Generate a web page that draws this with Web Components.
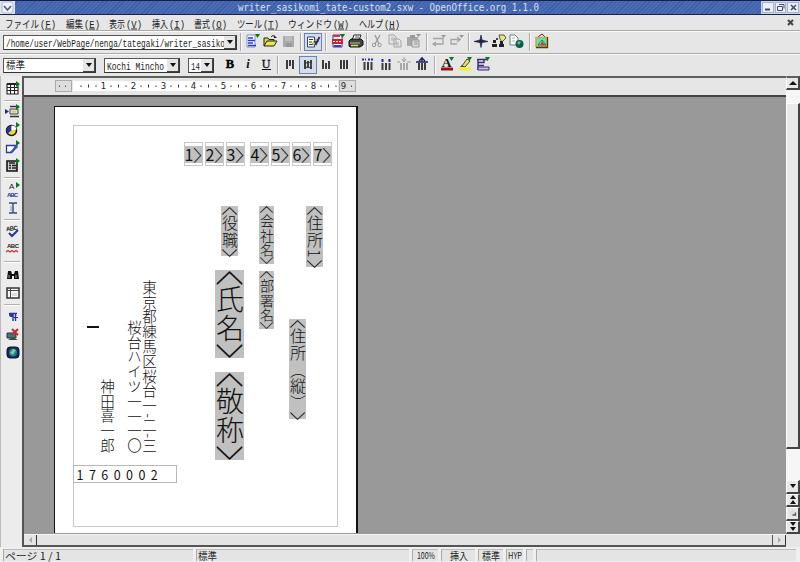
<!DOCTYPE html>
<html lang="ja"><head><meta charset="utf-8"><title>writer_sasikomi_tate-custom2.sxw - OpenOffice.org 1.1.0</title>
<style>
html,body{margin:0;height:100%;overflow:hidden;background:#e6e6e6}
body{font-family:"Noto Sans CJK JP","Liberation Sans",sans-serif;color:#222}
</style></head><body>
<oo-window></oo-window>
<script>
const define=(name,html,setup)=>{
  const t=document.createElement('template');t.innerHTML=html;
  customElements.define(name,class extends HTMLElement{
    connectedCallback(){ if(this.shadowRoot)return;
      this.attachShadow({mode:'open'}).append(t.content.cloneNode(true)); if(setup)setup(this,this.shadowRoot);}
  });
};

/* Single line label stretched to an exact width; "key" adds an underlined menu accelerator. */
define('fit-text','<style>:host{display:block;flex:none}svg{display:block;overflow:visible}</style>',(el,root)=>{
  const w=+el.getAttribute('w'),s=+el.getAttribute('size')||11,k=el.getAttribute('key');
  const h=Math.round(s*1.2),lw=k?w-17:w;
  const t=(x,len,str,extra='')=>`<text x="${x}" y="${h-2.5}" font-size="${s}" fill="currentColor" textLength="${len}" lengthAdjust="spacingAndGlyphs" ${extra}>${str}</text>`;
  root.innerHTML+=`<svg width="${w}" height="${h}">${t(0,lw,k?el.textContent+'':el.textContent)}${k?t(lw+1,16,'('+k+')','font-family="Liberation Mono"')+`<path d="M${lw+6} ${h-1}h6" stroke="currentColor"/>`:''}</svg>`;
});

const G='<path d="M11 1h5l-2.500 4z" fill="#087818"/>';
const R='<path d="M12 1v6l4-3z" fill="#087818"/>';
const lines=(xs,y1,y2,c='#3c3c3c')=>xs.map((x,i)=>`<path d="M${x} ${Array.isArray(y1)?y1[i]:y1}V${Array.isArray(y2)?y2[i]:y2}" stroke="${c}" stroke-width="2"/>`).join('');
const icons={
 newdoc:`<path d="M3 2h8v12H3z" fill="#fff" stroke="#7a8cd8"/><path d="M4 5h5M4 7.500h7M4 10h5M4 12.500h8" stroke="#2b38c0" stroke-width="1.500"/>`+G,
 open:`<path d="M2 13V5h4l1 1.500h5V8" fill="#d8d838" stroke="#222"/><path d="M2 13l3-5h10l-3 5z" fill="#e9e94c" stroke="#222"/><path d="M9 4q2-3 4 0" fill="none" stroke="#222"/><path d="M12 2v3h3" fill="#222"/>`,
 save:`<path d="M3 3h11v11H3z" fill="#aaa"/><path d="M5 3h7v5H5z" fill="#bcbcbc"/><path d="M6 10h6v4H6z" fill="#999"/>`,
 edit:`<path d="M3.500 4h7v10h-7z" fill="#fff" stroke="#333d78"/><path d="M5 6.500h4M5 9h3M5 11.500h4" stroke="#333"/><path d="M8 11l4-5 2 1-4 5z" fill="#e5dc3e" stroke="#8a8420" stroke-width=".6"/><path d="M11.500 12l4-8M10 8.500l2.500 1 2-2" fill="none" stroke="#1c2878" stroke-width="1.700"/>`,
 pdf:`<path d="M4 2h9v12H4z" fill="#fff" stroke="#3440a0"/><path d="M3 6h11v5H3z" fill="#d81c34"/><path d="M4 8.500h8" stroke="#fff" stroke-dasharray="2 1"/><path d="M5 13h7" stroke="#3440c0" stroke-width="2"/><path d="M4 3h7" stroke="#e03040" stroke-width="2"/>`+G,
 print:`<path d="M5 7l2-5h7l-2 5z" fill="#fff" stroke="#222"/><path d="M2 8l2-2h10l2 2v4l-3 2H3l-1-1z" fill="#444" stroke="#111"/><path d="M3 10h10" stroke="#bbb"/><path d="M4 12.500h7" stroke="#e0e040" stroke-width="1.500"/><path d="M8 4h4" stroke="#555"/>`,
 cut:`<path d="M6 2l4 9M11 2L6 11" stroke="#999" stroke-width="1.300"/><circle cx="5" cy="12" r="1.700" fill="none" stroke="#999"/><circle cx="10.500" cy="12" r="1.700" fill="none" stroke="#999"/>`,
 copy:`<path d="M2 2h5l2 2v7H2zM7 6h5l2 2v6H7z" fill="#e6e6e6" stroke="#a4a4a4"/><path d="M4 5h3M4 7h3M9 10h3M9 12h3" stroke="#aaa"/>`,
 paste:`<path d="M2 4h11v9H2z" fill="#a8a8a8"/><path d="M5 2h5v3H5z" fill="#999"/><path d="M7 7h7v7H7z" fill="#ddd" stroke="#999"/><path d="M9 9h4M9 11h4" stroke="#999"/><path d="M11 1h5l-2.500 3z" fill="#999"/>`,
 undo:`<path d="M6 10l-3 2 3 2M3 12h10V6.500H3" fill="none" stroke="#a4a4a4" stroke-width="1.300" transform="translate(0 -1)"/><path d="M11 2h5l-2.500 3z" fill="#999"/>`,
 redo:`<path d="M9 4l3 2.500L9 9M13 6.500H3V11h6" fill="none" stroke="#a4a4a4" stroke-width="1.300"/><path d="M11 2h5l-2.500 3z" fill="#999"/>`,
 nav:`<path d="M2 8.500L8 7l1-5 1 5 6 1.500-6 1-1 5-1-5z" fill="#1c2448" stroke="#1c2448" stroke-width=".7"/>`,
 styl:`<path d="M9 2h5l2 3-4 4-2-3z" fill="#ece76a" stroke="#555"/><path d="M3 7h3v3H3zM2 11h5v3H2zM9 11h5v3H9zM10 8h3v3h-3z" fill="#222"/><path d="M6 5h2v2H6z" fill="#444"/>`,
 hyper:`<path d="M2 2h5l3 3v7H2z" fill="#fff" stroke="#5e8570"/><path d="M4 5h3M4 8h3" stroke="#aac"/><circle cx="11.500" cy="11" r="4" fill="#0e5a4c"/><path d="M9 10l2-2 2 1-2 3z" fill="#63b98a"/>`,
 gallery:`<path d="M5 4l4-3 3 3" fill="none" stroke="#333"/><path d="M3 4.500h11v9H3z" fill="#5fe0c0" stroke="#c8b030" stroke-width="1.500"/><path d="M5 12l4-5 4 5z" fill="#f0e86a" stroke="#275"/><path d="M9 8l3 4H7z" fill="#b54838"/><path d="M14.500 4v10.500H3" fill="none" stroke="#6a2d12" stroke-width="1.300"/>`,
 bold:`<text x="9" y="12" text-anchor="middle" font-family="Liberation Serif" font-weight="700" font-size="12.500" fill="#000" stroke="#000" stroke-width=".4">B</text>`,
 ital:`<text x="9" y="12" text-anchor="middle" font-family="Liberation Serif" font-weight="700" font-style="italic" font-size="12.500" fill="#111">i</text>`,
 under:`<text x="9" y="11.500" text-anchor="middle" font-family="Liberation Serif" font-size="12" fill="#111" stroke="#111" stroke-width=".3">U</text><path d="M5 13.500h9" stroke="#111"/>`,
 al1:lines([6,9,12],4,[13,10,13]), al2:lines([6,9,12],[4,5,4],[13,12,13])+'<path d="M7 6l2 3-2 3M10 6l3 3-3 3" stroke="#555" fill="none"/>',
 al3:lines([6,9,12],[4,7,5],13), al4:lines([6,9,12],4,13),
 num:lines([5.5,9,12.5],6,14)+'<path d="M3 3.500h4M9 3.500h5" stroke="#232b9c" stroke-width="2" stroke-dasharray="2 1"/>',
 bul:lines([5.500,9,12.5],7,14)+'<path d="M4.500 3h2v3h-2zM11.500 3h2v3h-2z" fill="#1d2694"/>',
 out:lines([6,9,12],7,14,'#a8a8a8')+'<path d="M2 6h3M12 6h4M9 1v4M7 3l2 3 2-3" stroke="#a0a0a0" fill="none"/>',
 inn:lines([6,9,12],7,14)+'<path d="M3 6h12M9 1v5M6 5l3-3 3 3" stroke="#1c2260" fill="none" stroke-width="1.400"/>',
 fcol:`<text x="8.500" y="11" text-anchor="middle" font-family="Liberation Serif" font-weight="700" font-size="13.500" fill="#111">A</text><path d="M3 13h12" stroke="#a01018" stroke-width="3"/>`+G,
 hl:`<path d="M6 10l5-7 3 2-5 6z" fill="#f1e84a" stroke="#444"/><path d="M4 11l2-2 2 2z" fill="#444"/><path d="M3 13h12" stroke="#f4f020" stroke-width="3"/>`+G,
 bg:`<path d="M3 3.500h11M4 3v11M4 6.500h6V4M4 9.500h6" fill="none" stroke="#332c78" stroke-width="1.400"/><path d="M4 11h11v3H4z" fill="#dcb6e6" stroke="#332c78"/>`+G,
 table:`<path d="M3 4h11v10H3zM3 7.500h11M3 10.500h11M6.500 4v10M10.500 4v10" fill="#fff" stroke="#222" stroke-width="1.100"/><path d="M3 3h11v2H3z" fill="#222"/>`+R,
 insf:`<path d="M6 3.500h9M6 13.500h9" stroke="#333" stroke-width="1.300"/><path d="M6 6h8v5H6z" fill="#ddd" stroke="#444"/><path d="M8 7.500h4v2H8z" fill="#d8cf62"/><path d="M1 6v5l4-2.500z" fill="#1c2a90"/>`+R,
 obj:`<circle cx="7.500" cy="9.500" r="5" fill="#e7df30" stroke="#111" stroke-width="1.500"/><path d="M7.500 9.500V4.500a5 5 0 0 0-4 8z" fill="#2832a0"/><path d="M7.500 9.500V4.500a5 5 0 0 1 5 4z" fill="#fff"/>`+R,
 draw:`<path d="M2.500 6.500h9l-2 5-2 2h-5z" fill="#fff" stroke="#2d3a98" stroke-width="1.300"/><path d="M6 13l7-8 1 3-6 6z" fill="#3b55c0"/>`+R,
 form:`<path d="M3 4h10v10H3z" fill="#ccc" stroke="#111" stroke-width="1.600"/><path d="M5 6h6M5 8.500h2M8 8.500h4M5 11h2M8 11h4" stroke="#222" stroke-width="1.600"/>`+R,
 auto:`<text x="5" y="8" font-family="Liberation Sans" font-size="8" fill="#222">A</text><text x="3" y="15.500" font-family="Liberation Sans" font-weight="700" font-size="6" textLength="11" fill="#24338c">ABC</text>`+R,
 cursor:`<path d="M5 4h3l1 1 1-1h3M5 14h3l1-1 1 1h3M9 5v8" fill="none" stroke="#39467c" stroke-width="1.400"/><path d="M7 7v5" stroke="#8a94bd"/>`,
 spell:`<text x="2" y="8.500" font-family="Liberation Sans" font-weight="700" font-size="6" textLength="12" fill="#222" transform="rotate(-8 8 8)">ABC</text><path d="M5 11l3 3 6-6" fill="none" stroke="#26359c" stroke-width="2"/>`,
 aspell:`<text x="3" y="8" font-family="Liberation Sans" font-weight="700" font-size="6" textLength="12" fill="#222">ABC</text><path d="M2 12l2-1.500 2 1.500 2-1.500 2 1.500 2-1.500 2 1.500" fill="none" stroke="#d3303a" stroke-width="1.300"/>`,
 find:`<path d="M4 5h3l1 3h2l1-3h3l1 8h-5v-3H8v3H3z" fill="#111"/><path d="M5 9v3M12 9v3" stroke="#7d8b54" stroke-width="1.300"/>`,
 data:`<path d="M3 4h12v10H3z" fill="#f7f7f7" stroke="#333" stroke-width="1.500"/><path d="M3 6.500h12M6.500 4v10" stroke="#444"/><path d="M8 9h5v3H8z" fill="#ddd"/>`,
 para:`<path d="M9 5v8M11.500 5v8M5 5.500h8" stroke="#26359c" stroke-width="1.400"/><path d="M9 5H7q-2 0-2 2t2 2h2z" fill="#26359c"/><path d="M9 9.500h5" stroke="#26359c"/>`,
 graf:`<path d="M3 7h9v5H3z" fill="#3c7c73" stroke="#333"/><path d="M4 14l3-2h3l4 2z" fill="#444"/><path d="M8 3l6 6M14 3L8 9" stroke="#c8283a" stroke-width="2"/>`,
 online:`<rect x="3" y="3" width="12" height="11" rx="3" fill="#14265c" stroke="#0b163c"/><circle cx="9" cy="8.500" r="4" fill="#1d7d8c"/><path d="M6 9l3-4 3 1-3 5z" fill="#74cf9c"/>`
};
define('oo-icon',`<style>:host{display:block;box-sizing:border-box;width:18px;height:18px;flex:none}:host([pressed]){background:#d5dcea;outline:1px solid #6c82b5;outline-offset:-1px}svg{display:block}</style>`,
 (el,root)=>{const n=el.getAttribute('name');root.innerHTML+=`<svg width="18" height="18" viewBox="0 0 18 18">${icons[n]}</svg>`});

define('oo-sep',`<style>:host{display:flex;flex:none;justify-content:center;align-items:stretch}i{border-left:1px solid #aaa;border-right:1px solid #fafafa}:host([h]){flex-direction:column;align-items:stretch}:host([h]) i{border:0;border-top:1px solid #b0b0b0;border-bottom:1px solid #fff}</style><i></i>`,
 (el)=>{el.style[el.hasAttribute('h')?'height':'width']=el.getAttribute('size')+'px'; if(!el.hasAttribute('h'))el.style.height='18px'});

define('oo-combo',`<style>:host{display:flex;box-sizing:border-box;height:15px;flex:none;background:#fff;border:1px solid #555;border-right-color:#333;border-bottom-color:#333}
.t{flex:1;overflow:hidden;display:flex;align-items:center;padding-left:2px}
.b{width:12px;background:#e6e6e6;border:1px solid #444;border-width:0 1px 1px 0;box-sizing:border-box;display:grid;place-items:center}
.b::after{content:"";border:3px solid transparent;border-top:4px solid #111;border-bottom:0}</style><div class="t"><slot></slot></div><div class="b"></div>`,
 el=>el.style.width=el.getAttribute('w')+'px');

define('oo-title',`<style>:host{display:flex;height:15px;box-sizing:border-box;border-top:1px solid #16204e;border-bottom:1px solid #18224e;background:#18224e;color:#d9e0f2;font-family:"DejaVu Sans Mono",monospace}
.b{width:15px;background:#dfe4ef;display:grid;place-items:center}
.m{flex:1;display:flex;justify-content:flex-start;padding:0 0 0 223px;background:repeating-linear-gradient(135deg,#4a6cb4 0 2px,#3d5da5 2px 3px)}
.w{display:flex;gap:1px;background:#cdd5e8;padding:1px;width:37px}.w span{flex:1;display:grid;place-items:center;background:#eceff6;outline:1px solid #a7b2cb;outline-offset:-1px}</style>
<div class="b"><svg width="13" height="13"><rect x="1" y="1" width="11" height="11" rx="2" fill="#f0f3f8" stroke="#b0bace"/><path d="M3 5l3.500 4 3.500-4" fill="none" stroke="#52618c" stroke-width="1.800"/></svg></div>
<div class="m"><fit-text w="301" size="10">writer_sasikomi_tate-custom2.sxw - OpenOffice.org 1.1.0</fit-text></div>
<div class="w"><span><svg width="9" height="9"><path d="M2 6.500h5" stroke="#414c70" stroke-width="2"/></svg></span><span><svg width="9" height="9"><path d="M3 1.500h5v4M1.500 3.500h5v4h-5z" fill="none" stroke="#414c70"/></svg></span><span><svg width="9" height="9"><path d="M2 2l5 5M7 2L2 7" stroke="#414c70" stroke-width="1.600"/></svg></span></div>`);

define('oo-menu',`<style>:host{display:flex;height:16px;box-sizing:border-box;align-items:center;padding:0 0 0 5px;border-bottom:1px solid #aaa}.g{display:flex;gap:9.500px;padding-top:1px}svg{margin-left:auto;margin-right:5px}</style>
<div class="g"><fit-text w="51" size="10.5" key="F">ファイル</fit-text><fit-text w="34" size="10.5" key="E">編集</fit-text><fit-text w="33" size="10.5" key="V">表示</fit-text><fit-text w="33" size="10.5" key="I">挿入</fit-text><fit-text w="33" size="10.5" key="O">書式</fit-text><fit-text w="42" size="10.5" key="T">ツール</fit-text><fit-text w="61" size="10.5" key="W">ウィンドウ</fit-text><fit-text w="41" size="10.5" key="H">ヘルプ</fit-text></div>
<svg width="9" height="9"><path d="M2 2l5 5M7 2L2 7" stroke="#444" stroke-width="2"/></svg>`);

define('oo-bar',`<style>:host{display:flex;height:22.500px;box-sizing:border-box;align-items:center;border-top:1px solid #fafafa;border-bottom:1px solid #aaa}:host([last]){border-bottom:0}</style><slot></slot>`);

define('oo-side',`<style>:host{display:block;width:22px;box-sizing:border-box;padding:4px 2px 0 3px;border-left:1px solid #bbb;background:#ececec}</style><slot></slot>`);

define('oo-ruler',`<style>:host{display:block;height:21px;box-sizing:border-box;border-top:2px solid #5c605a;border-bottom:2px solid #444;background:#e6e6e6}svg{display:block}</style>`,(el,root)=>{
 let s='<rect x="49" y="3" width="265" height="10" fill="#fff"/><g fill="#ddd" stroke="#aaa"><rect x="31.500" y="2.500" width="16" height="11"/><rect x="315.500" y="2.500" width="16" height="11"/></g>';
 for(let q=1;q<37;q++){const x=49.500+q*7.500; if(q%4===0)s+=`<text x="${x}" y="11" font-size="8.500" text-anchor="middle" font-family="DejaVu Sans" fill="#222">${q/4}</text>`; else s+=`<rect x="${x-.5}" y="${q%4===2?6.500:7.500}" width="1" height="${q%4===2?3:1.500}" fill="#333"/>`;}
 s+='<rect x="35" y="7.500" width="1" height="1.500" fill="#555"/><rect x="41" y="7.500" width="1" height="1.500" fill="#555"/><rect x="327" y="7.500" width="1" height="1.500" fill="#555"/>';
 root.innerHTML+=`<svg width="500" height="17">${s}</svg>`;
});

/* Vertical merge field: the outer chevrons sit in cells of height b, characters advance by "p". */
define('merge-field',`<style>:host{position:absolute;display:flex;flex-direction:column;align-items:center;background:#c0c0c0;color:#111;font-weight:300}
.v{writing-mode:vertical-rl;white-space:nowrap;flex:none;display:block}.b{display:grid;place-items:start center;flex:none;overflow:visible}.b span{display:block;writing-mode:vertical-rl;line-height:1;font-weight:100;font-feature-settings:"vert"}</style>`,(el,root)=>{
 const a=n=>+el.getAttribute(n),[x,y,w,h,p,b]=['x','y','w','h','p','b'].map(a),fs=w-1,t=el.textContent,wt=fs>20?200:300;
 Object.assign(el.style,{left:x+'px',top:y+'px',width:w+'px',height:h+'px'});
 const br=(c,dy)=>`<div class="b" style="height:${b}px;width:${w}px"><span style="font-weight:${wt};font-size:${fs}px;transform:translateY(${dy}px) scaleY(1.45)">${c}</span></div>`;
 root.innerHTML+=br('〈',-fs*.64)+`<span class="v" style="height:${h-2*b}px;font-size:${fs}px;letter-spacing:${p-fs}px;line-height:${w}px">${t}</span>`+br('〉',fs*.17);
});
define('v-text',`<style>:host{position:absolute;writing-mode:vertical-rl;white-space:nowrap;font-weight:300;color:#111;line-height:15px;font-size:14.500px}</style><slot></slot>`,el=>{el.style.left=el.getAttribute('x')+'px';el.style.top=el.getAttribute('y')+'px';el.style.letterSpacing=(el.getAttribute('p')-14.5)+'px'});
define('zip-box',`<style>:host{position:absolute;top:35px;box-sizing:border-box;width:19px;height:24px;border:1px solid #c8c8c8;padding:3px 0 2px}div{background:#c0c0c0;height:17px;display:flex;align-items:center;justify-content:center;color:#111;line-height:17px;font-size:16px}span{display:block;width:9px;text-align:center}b{font-weight:300;font-size:16px;width:8px;display:flex;justify-content:flex-start;transform:scaleX(1.4);font-feature-settings:"halt"}</style><div><span><slot></slot></span><b>〉</b></div>`,el=>el.style.left=el.getAttribute('x')+'px');

define('oo-page',`<style>:host{display:block;position:relative;margin:9px 0 0 30px;width:304px;height:427px;box-sizing:border-box;background:#fff;border:1px solid #111;border-right-width:2px;border-bottom:0}
.frame{position:absolute;left:18px;top:17.5px;width:263px;height:400px;border:1px solid #c8c8c8}
.num{position:absolute;left:18px;top:358px;width:102px;height:16px;border:1px solid #b8b8b8;font-size:12.500px;line-height:17px;letter-spacing:5.450px;text-indent:2.500px;color:#111}
.dash{position:absolute;left:32px;top:219px;width:12px;height:2px;background:#111}</style>
<div class="frame"></div>
<zip-box x="128.5">1</zip-box><zip-box x="149.5">2</zip-box><zip-box x="170.5">3</zip-box><zip-box x="194.5">4</zip-box><zip-box x="215.5">5</zip-box><zip-box x="236.5">6</zip-box><zip-box x="257.5">7</zip-box>
<merge-field x="166" y="99" w="17" h="50" p="17" b="8.5">役職</merge-field>
<merge-field x="204" y="99" w="15" h="58" p="14.500" b="7.5">会社名</merge-field>
<merge-field x="251" y="99" w="17" h="61" p="17" b="8.500">住所1</merge-field>
<merge-field x="160" y="163" w="29" h="88" p="29.500" b="14.500">氏名</merge-field>
<merge-field x="204" y="164" w="15" h="58" p="14.500" b="7.5">部署名</merge-field>
<merge-field x="234" y="212" w="17" h="100" p="16.800" b="8.5">住所（縦）</merge-field>
<merge-field x="160" y="265" w="29" h="88" p="29.500" b="14.500">敬称</merge-field>
<v-text x="87" y="173" p="14.800">東京都練馬区桜台一-二-三</v-text>
<v-text x="72" y="213" p="14.800">桜台ハイツ一一一〇</v-text>
<v-text x="45" y="272" p="14.800">神田喜一郎</v-text>
<div class="dash"></div><div class="num">1760002</div>`);

define('oo-vscroll',`<style>:host{display:flex;flex-direction:column;width:14px;background:#e6e6e6}
div{height:13.500px;box-sizing:border-box;border:1px solid #fff;border-right:2px solid #444;border-bottom:2px solid #444;display:grid;place-items:center;flex:none;background:#e8e8e8}
.track{flex:1;height:auto;background:#f6f6f6;border:0;display:flex;flex-direction:column;place-items:stretch;padding-top:13px}svg{display:block}i{flex:none;display:block;height:346px;box-sizing:border-box;background:#e9e9e9;border:1px solid #fff;border-right:2px solid #444;border-bottom:2px solid #444}</style>
<div style="border-top:2px solid #5c605a"><svg width="8" height="5"><path d="M0 5l4-4 4 4z" fill="#111"/></svg></div>
<div class="track"><i></i></div>
<div><svg width="8" height="5"><path d="M1 0h6L4 4z" fill="#111"/></svg></div>
<div><svg width="8" height="9"><path d="M1 4l3-4 3 4zM1 9l3-4 3 4z" fill="#111"/></svg></div>
<div><svg width="8" height="8"><circle cx="4" cy="4" r="3" fill="#ddd"/><path d="M6.500 3.500v2.500H3.500" fill="none" stroke="#555" stroke-width="1.300"/></svg></div>
<div><svg width="8" height="9"><path d="M1 0h6L4 4zM1 5h6L4 9z" fill="#111"/></svg></div><section style="height:13px"></section>`);
define('oo-hscroll',`<style>:host{display:flex;height:13px;box-sizing:border-box;border-bottom:2px solid #555;border-top:1px solid #f4f4f4;background:#e4e4e4}div{width:12px;display:grid;place-items:center}.l{border-right:1px solid #333}.r{border-left:1px solid #555;border-right:1px solid #333;margin-left:auto}</style><div class="l"><svg width="5" height="6"><path d="M4 0v6L1 3z" fill="#aaa"/></svg></div><div class="r"><svg width="5" height="6"><path d="M1 0v6l3-3z" fill="#aaa"/></svg></div>`);

define('oo-status',`<style>:host{display:flex;height:15px;box-sizing:border-box;padding:2px 4px 0 3px;gap:3px;background:#efefef;color:#222}
div{box-sizing:border-box;height:12px;border-left:1px solid #aaa;border-top:1px solid #bbb;background:#e4e4e4;display:flex;align-items:center;justify-content:center;flex:none}.s{justify-content:flex-start;padding-left:1px}</style>
<div class="s" style="width:190px"><fit-text w="56" size="10">ページ 1 / 1</fit-text></div>
<div class="s" style="width:213px"><fit-text w="19" size="10">標準</fit-text></div>
<div style="width:26px"><fit-text w="18" size="9">100%</fit-text></div>
<div style="width:34px"><fit-text w="18" size="10">挿入</fit-text></div>
<div style="width:25px"><fit-text w="18" size="10">標準</fit-text></div>
<div style="width:17px"><fit-text w="14" size="9">HYP</fit-text></div>
<div style="width:7px"></div><div style="flex:1"></div>`);

const I=s=>s.split(' ').map(n=>/^\d/.test(n)?`<oo-sep size="${n}"></oo-sep>`:n[0]==='*'?`<oo-icon pressed name="${n.slice(1)}"></oo-icon>`:`<oo-icon name="${n}"></oo-icon>`).join('');
define('oo-window',`<style>:host{display:flex;flex-direction:column;width:800px;height:562px;background:#e6e6e6}
.body{flex:1;display:flex;min-height:0}.doc{flex:1;display:flex;flex-direction:column;border-left:2px solid #555;min-width:0}.canvas{flex:1;background:#999;overflow:hidden;min-height:0;display:flow-root}
.one{padding-left:3px}.gap{width:8px;flex:none}.mono{font-family:"Liberation Mono",monospace}</style>
<oo-title></oo-title><oo-menu></oo-menu>
<oo-bar class="one"><oo-combo w="234" class="mono"><fit-text w="219" size="10.5">/home/user/WebPage/nenga/tategaki/writer_sasiko</fit-text></oo-combo><oo-sep size="7"></oo-sep>${I('newdoc open save 6 *edit 7 pdf print 4 cut copy paste 7 undo redo 6 nav styl hyper 7 gallery')}</oo-bar>
<oo-bar class="one" last><oo-combo w="93"><fit-text w="19" size="10">標準</fit-text></oo-combo><div class="gap"></div><oo-combo w="76" class="mono"><fit-text w="57" size="10.5">Kochi Mincho</fit-text></oo-combo><div class="gap"></div><oo-combo w="26" class="mono"><fit-text w="9" size="10.5">14</fit-text></oo-combo><div style="width:7px"></div>${I('bold ital under 6 al1 *al2 al3 al4 6 num bul out inn 7 fcol hl bg')}</oo-bar>
<div class="body"><oo-side>${'table 5 insf obj draw form 6 auto cursor 5 spell aspell 8 find data 6 para graf online'.split(' ').map(n=>/^\d/.test(n)?`<oo-sep h size="${n}"></oo-sep>`:`<oo-icon name="${n}"></oo-icon>`).join('')}</oo-side>
<div class="doc"><oo-ruler></oo-ruler><div class="canvas"><oo-page></oo-page></div><oo-hscroll></oo-hscroll></div><oo-vscroll></oo-vscroll></div>
<oo-status></oo-status>`);
</script></body></html>
